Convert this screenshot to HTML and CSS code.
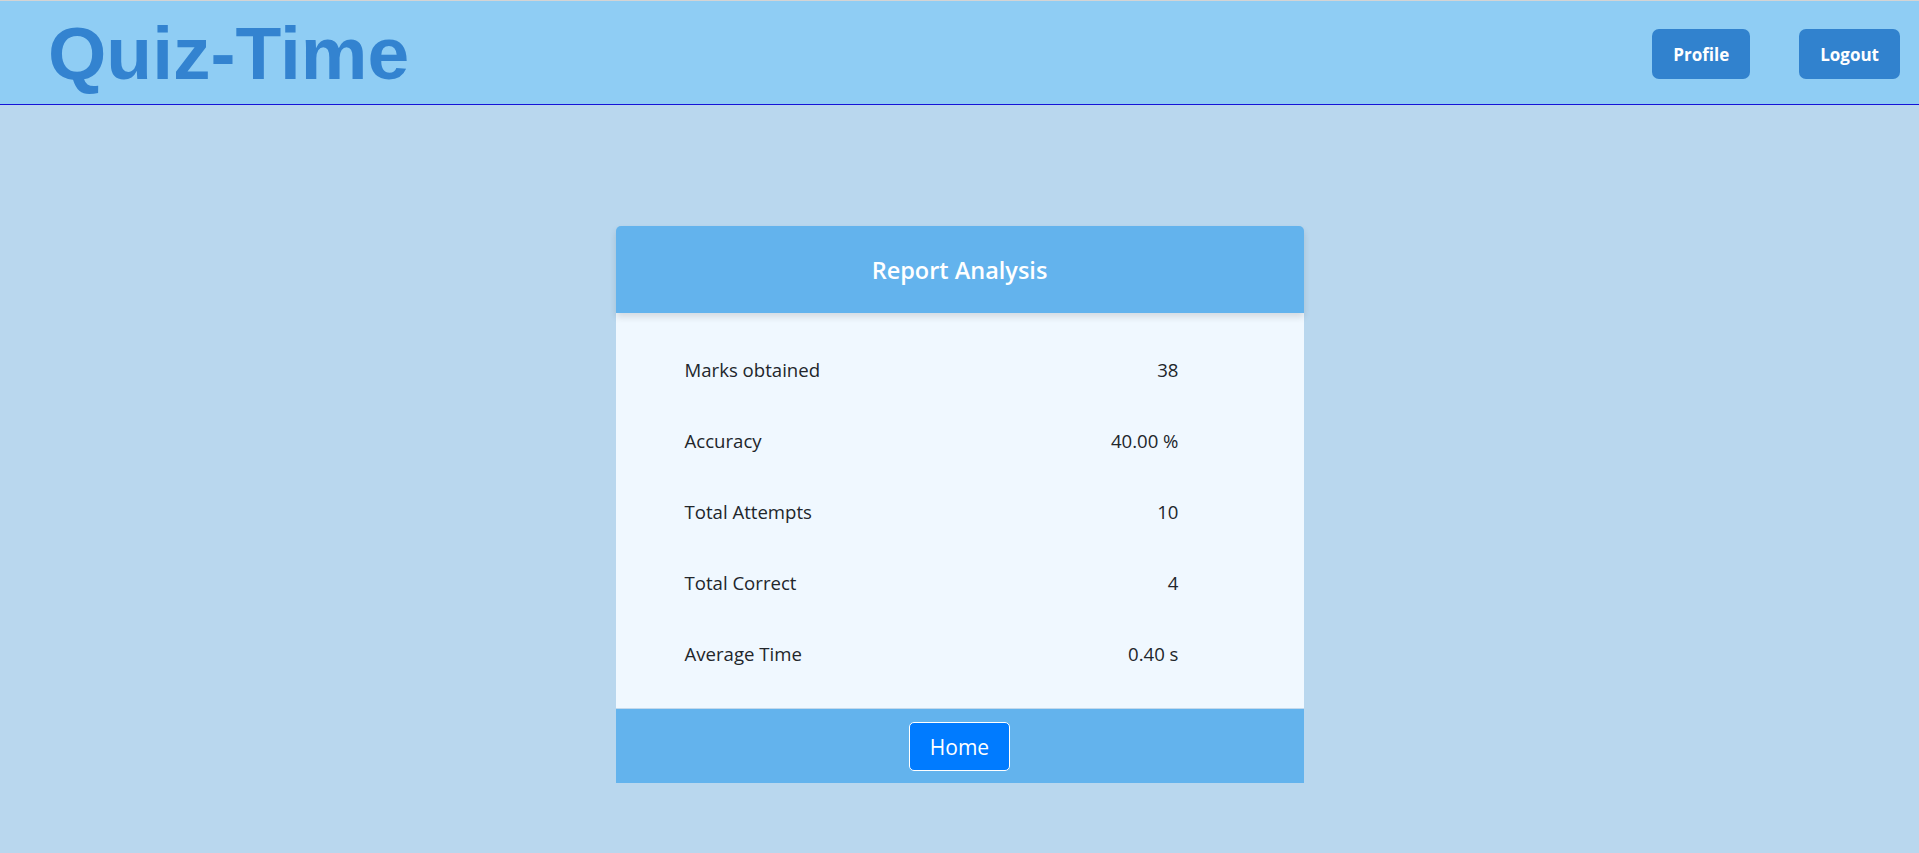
FILE: index.html
```html
<!DOCTYPE html>
<html lang="en">
<head>
<meta charset="utf-8">
<title>Quiz-Time</title>
<link rel="stylesheet" href="styles.css">
</head>
<body>
<header class="topbar">
  <h1 class="brand">Quiz-Time</h1>
  <nav class="nav">
    <button class="nav-btn">Profile</button>
    <button class="nav-btn">Logout</button>
  </nav>
</header>
<main class="main">
  <section class="card">
    <div class="card-header">Report Analysis</div>
    <div class="card-body">
      <div class="row"><span class="label">Marks obtained</span><span class="value">38</span></div>
      <div class="row"><span class="label">Accuracy</span><span class="value">40.00 %</span></div>
      <div class="row"><span class="label">Total Attempts</span><span class="value">10</span></div>
      <div class="row"><span class="label">Total Correct</span><span class="value">4</span></div>
      <div class="row"><span class="label">Average Time</span><span class="value">0.40 s</span></div>
    </div>
    <div class="card-footer">
      <button class="home-btn">Home</button>
    </div>
  </section>
</main>
</body>
</html>
```
FILE: styles.css
```css
* { box-sizing: border-box; }

html, body {
  margin: 0;
  padding: 0;
}

body {
  background: #b9d7ee;
  font-family: "Open Sans", "Noto Sans", sans-serif;
  color: #212529;
  min-height: 853px;
}

.topbar {
  height: 105px;
  background: #8fcdf4;
  border-top: 1px solid #d4d4d4;
  border-bottom: 1px solid #1414d8;
  display: flex;
  align-items: center;
  justify-content: space-between;
  padding: 2px 19px 0 48px;
}

.brand {
  margin: 0;
  font-family: "Liberation Sans", Arial, sans-serif;
  font-weight: 700;
  font-size: 75px;
  line-height: 1;
  color: #3383d0;
}

.nav {
  display: flex;
  gap: 49px;
  align-self: flex-start;
  margin-top: 26px;
}

.nav-btn {
  height: 50px;
  padding: 0 21px;
  border: none;
  border-radius: 7px;
  background: #3182ce;
  color: #fff;
  font-family: "Open Sans", "Noto Sans", sans-serif;
  font-weight: 700;
  font-size: 17px;
}

.main {
  display: flex;
  justify-content: center;
  padding-top: 121px;
}

.card {
  width: 688px;
  display: flex;
  flex-direction: column;
}

.card-header {
  height: 87px;
  background: #63b3ed;
  border-radius: 5px 5px 0 0;
  color: #fff;
  font-weight: 600;
  font-size: 23.5px;
  display: flex;
  align-items: center;
  justify-content: center;
  box-shadow: 0 4px 7px rgba(0, 0, 0, 0.12);
  position: relative;
  z-index: 1;
}

.card-body {
  height: 395px;
  background: #f0f8ff;
  padding: 21px 125px 0 69px;
}

.row {
  height: 71px;
  display: flex;
  align-items: center;
  justify-content: space-between;
  font-size: 18.6px;
  color: #22262b;
}

.card-footer {
  height: 75px;
  background: #63b3ed;
  border-top: 1px solid #c3d9ec;
  display: flex;
  align-items: center;
  justify-content: center;
  padding-top: 1px;
}

.home-btn {
  height: 49px;
  padding: 0 20px;
  background: #007bff;
  color: #fff;
  border: 1px solid #fff;
  border-radius: 5px;
  font-family: "Open Sans", "Noto Sans", sans-serif;
  font-size: 21px;
}
```
